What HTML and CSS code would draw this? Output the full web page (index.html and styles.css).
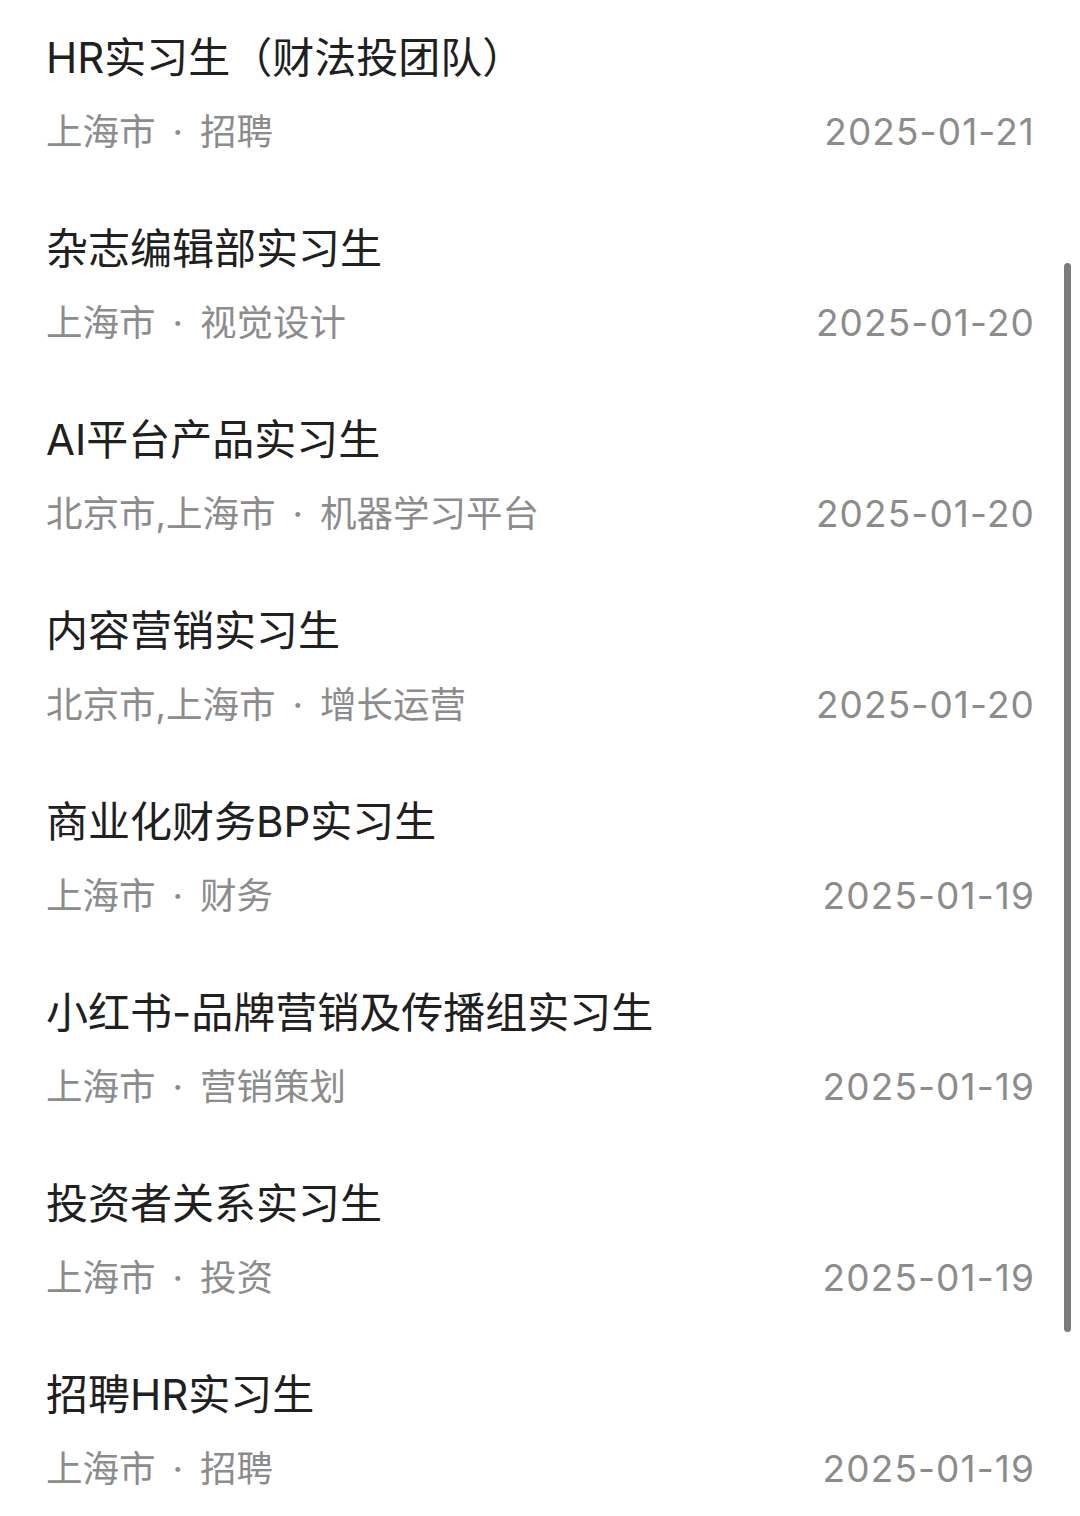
FILE: index.html
```html
<!DOCTYPE html>
<html lang="zh-CN">
<head>
  <meta charset="UTF-8" />
  <meta name="viewport" content="width=device-width, initial-scale=1.0"/>
  <title>职位列表</title>
  <link rel="stylesheet" href="styles.css">
</head>
<body>

<!-- 职位列表 -->
<div class="job-list">
  <div class="job">
    <div class="job-title">HR实习生（财法投团队）</div>
    <div class="job-meta">
      <span class="job-info">上海市<span class="dot">·</span>招聘</span>
      <span class="job-date">2025-01-21</span>
    </div>
  </div>

  <div class="job">
    <div class="job-title">杂志编辑部实习生</div>
    <div class="job-meta">
      <span class="job-info">上海市<span class="dot">·</span>视觉设计</span>
      <span class="job-date">2025-01-20</span>
    </div>
  </div>

  <div class="job">
    <div class="job-title">AI平台产品实习生</div>
    <div class="job-meta">
      <span class="job-info">北京市,上海市<span class="dot">·</span>机器学习平台</span>
      <span class="job-date">2025-01-20</span>
    </div>
  </div>

  <div class="job">
    <div class="job-title">内容营销实习生</div>
    <div class="job-meta">
      <span class="job-info">北京市,上海市<span class="dot">·</span>增长运营</span>
      <span class="job-date">2025-01-20</span>
    </div>
  </div>

  <div class="job">
    <div class="job-title">商业化财务BP实习生</div>
    <div class="job-meta">
      <span class="job-info">上海市<span class="dot">·</span>财务</span>
      <span class="job-date">2025-01-19</span>
    </div>
  </div>

  <div class="job">
    <div class="job-title">小红书-品牌营销及传播组实习生</div>
    <div class="job-meta">
      <span class="job-info">上海市<span class="dot">·</span>营销策划</span>
      <span class="job-date">2025-01-19</span>
    </div>
  </div>

  <div class="job">
    <div class="job-title">投资者关系实习生</div>
    <div class="job-meta">
      <span class="job-info">上海市<span class="dot">·</span>投资</span>
      <span class="job-date">2025-01-19</span>
    </div>
  </div>

  <div class="job">
    <div class="job-title">招聘HR实习生</div>
    <div class="job-meta">
      <span class="job-info">上海市<span class="dot">·</span>招聘</span>
      <span class="job-date">2025-01-19</span>
    </div>
  </div>
</div>

<!-- 滚动条 -->
<div class="scrollbar"></div>

</body>
</html>
```

FILE: styles.css
```css
:root {
  --title: #202020;
  --muted: #8c8c8c;
  --bar: #7c7c7c;
}

* {
  margin: 0;
  padding: 0;
  box-sizing: border-box;
}

body {
  font-family: Inter, "Noto Sans CJK SC", sans-serif;
  background-color: #fff;
  overflow: hidden;
}

/* List */
.job-list {
  padding: 30px 46px 0 46px;
}

.job {
  height: 191px;
}

.job-title {
  font-size: 42px;
  line-height: 56px;
  color: var(--title);
  white-space: nowrap;
}

.job-meta {
  display: flex;
  justify-content: space-between;
  align-items: center;
  margin-top: 18px;
  font-size: 36.5px;
  line-height: 56px;
  color: var(--muted);
}

.dot {
  margin: 0 17px;
}

.job-date {
  font-size: 37px;
  letter-spacing: 1.1px;
  margin-right: -1px;
}

/* Scrollbar */
.scrollbar {
  position: absolute;
  top: 263px;
  right: 9px;
  width: 7px;
  height: 1069px;
  border-radius: 4px;
  background-color: var(--bar);
}
```
